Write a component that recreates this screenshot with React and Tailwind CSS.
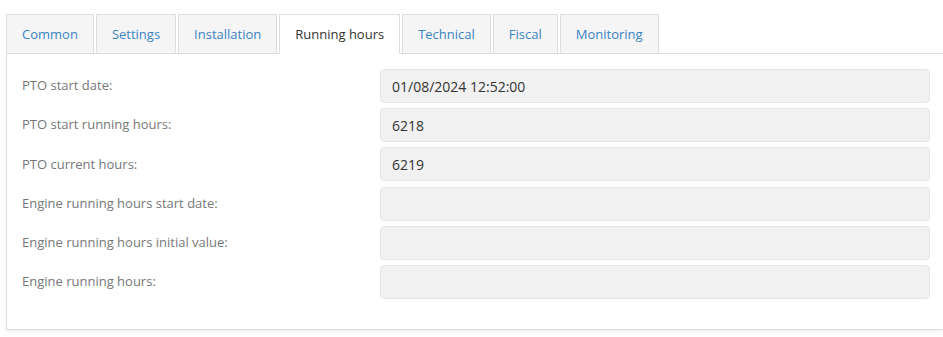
const tabs = ['Common', 'Settings', 'Installation', 'Running hours', 'Technical', 'Fiscal', 'Monitoring'];

const rows = [
  ['PTO start date:', '01/08/2024 12:52:00'],
  ['PTO start running hours:', '6218'],
  ['PTO current hours:', '6219'],
  ['Engine running hours start date:', ''],
  ['Engine running hours initial value:', ''],
  ['Engine running hours:', ''],
];

export default function App() {
  return (
    <div className="min-h-screen bg-white pl-[6px] pt-[14px] font-['Open_Sans',sans-serif]">
      {/* Tabs */}
      <ul className="relative z-10 flex gap-[2px]">
        {tabs.map((t) => {
          const active = t === 'Running hours';
          return (
            <li
              key={t}
              className={
                active
                  ? '-mb-px flex h-[40px] items-center border border-b-0 border-[#dddddd] bg-white px-[15px] pt-[1px] text-[13px] text-[#333333]'
                  : 'flex h-[39px] items-center border border-b-0 border-[#dddddd] bg-[#f5f5f5] px-[15px] pt-[1px] text-[13px] text-[#3a83c4]'
              }
            >
              {t}
            </li>
          );
        })}
      </ul>

      {/* Panel */}
      <div className="border-t border-l border-b border-[#dddddd] pl-[15px] pr-[13px] pt-[15px] pb-[30px] shadow-[0_2px_4px_rgba(0,0,0,0.06)]">
        <div className="flex flex-col gap-[5.2px]">
          {rows.map(([label, value]) => (
            <div key={label} className="flex items-center">
              <div className="w-[358px] text-[13px] text-[#777777]">{label}</div>
              <div className="flex h-[34px] flex-1 items-center rounded-[4px] border border-[#e6e6e6] bg-[#f1f1f1] px-[11px] text-[14px] text-[#333333]">
                {value}
              </div>
            </div>
          ))}
        </div>
      </div>
    </div>
  );
}
